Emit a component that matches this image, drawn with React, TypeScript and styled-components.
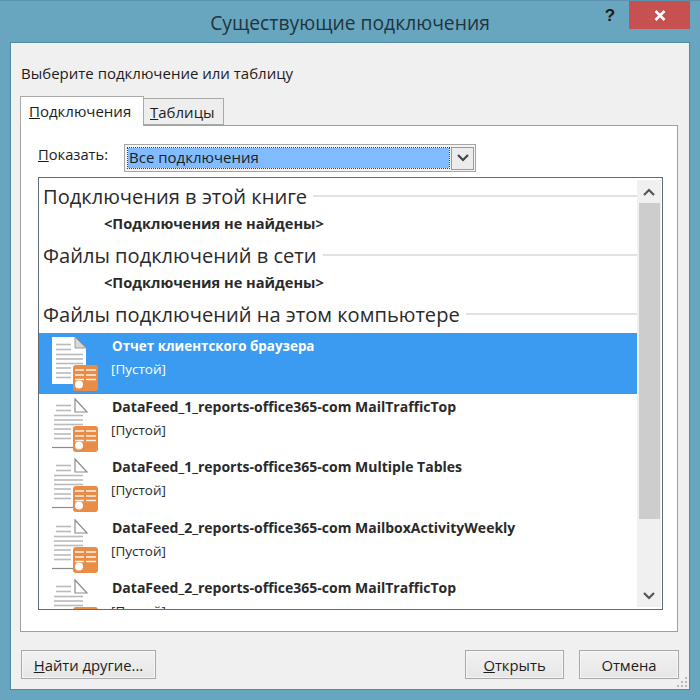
import React, { FunctionComponent } from 'react';
import styled, { createGlobalStyle } from 'styled-components';

const GlobalStyle = createGlobalStyle`
  html, body {
    margin: 0;
    padding: 0;
    background: #68a6c0;
  }
  * {
    box-sizing: border-box;
  }
`;

const Window = styled.div`
  width: 700px;
  height: 700px;
  display: flex;
  flex-direction: column;
  background: #68a6c0;
  border-top: 1px solid #5a93ab;
  font-family: "Open Sans", "Noto Sans", sans-serif;
  color: #1c1c1c;
  overflow: hidden;
`;

const TitleBar = styled.div`
  height: 41px;
  flex: none;
  display: grid;
  grid-template-columns: 1fr auto 1fr;
  padding: 0 10px;
`;

const Title = styled.div`
  grid-column: 2;
  font-size: 19.3px;
  line-height: 43px;
  color: #22343c;
`;

const Controls = styled.div`
  grid-column: 3;
  display: flex;
  justify-content: flex-end;
  align-items: flex-start;
`;

const HelpButton = styled.div`
  width: 30px;
  font-family: "Liberation Sans", sans-serif;
  font-size: 17px;
  font-weight: 700;
  line-height: 29px;
  text-align: center;
  color: #1a1a1a;
  margin-right: 4px;
`;

const CloseButton = styled.div`
  width: 61px;
  height: 28px;
  background: #c75050;
  display: flex;
  align-items: center;
  justify-content: center;
`;

const Panel = styled.div`
  position: relative;
  flex: none;
  width: 680px;
  height: 648px;
  margin-left: 10px;
  border: 1px solid #4f8ba5;
  background: #f0f0f0;
  padding: 0 10px 10px 8px;
  display: flex;
  flex-direction: column;
`;

const Prompt = styled.div`
  font-size: 15px;
  line-height: 18px;
  margin: 21px 0 14px 2px;
`;

const TabRow = styled.div`
  display: flex;
  align-items: flex-end;
  height: 29px;
  flex: none;
`;

const Tab = styled.div<{ $active?: boolean }>`
  height: ${p => (p.$active ? '30px' : '27px')};
  width: ${p => (p.$active ? '124px' : '80px')};
  margin-left: ${p => (p.$active ? '1px' : '0')};
  margin-bottom: ${p => (p.$active ? '-1px' : '0')};
  border: 1px solid #a9a9a9;
  border-bottom: ${p => (p.$active ? 'none' : '1px solid #a9a9a9')};
  border-left: ${p => (p.$active ? '1px solid #a9a9a9' : 'none')};
  background: ${p => (p.$active ? '#ffffff' : '#eeeeee')};
  position: relative;
  font-size: 15px;
  line-height: ${p => (p.$active ? '28px' : '27px')};
  padding-left: ${p => (p.$active ? '8px' : '6px')};
`;

const TabPanel = styled.div`
  flex: none;
  height: 507px;
  margin: 0 1px 0 1px;
  border: 1px solid #a0a0a0;
  background: #ffffff;
  padding: 18px 14px 21px 17px;
  display: flex;
  flex-direction: column;
`;

const ShowRow = styled.div`
  display: flex;
  align-items: flex-start;
  height: 28px;
  flex: none;
  margin-bottom: 5px;
`;

const ShowLabel = styled.div`
  width: 86px;
  font-size: 14.7px;
  line-height: 20px;
`;

const Combo = styled.div`
  width: 352px;
  height: 28px;
  border: 1px solid #a6a6a6;
  background: #f4f4f4;
  display: flex;
  align-items: center;
  padding: 0 1px 0 3px;
`;

const ComboValue = styled.div`
  flex: 1;
  height: 20px;
  background: #80bcff;
  outline: 1px dotted #4a3a20;
  font-size: 15px;
  line-height: 19px;
  padding-left: 1px;
  margin-right: 2px;
`;

const ComboArrow = styled.div`
  width: 23px;
  height: 23px;
  border: 1px solid #9a9a9a;
  background: #ececec;
  display: flex;
  align-items: center;
  justify-content: center;
`;

const ListBox = styled.div`
  flex: 1;
  border: 1px solid #5f6c75;
  background: #ffffff;
  display: flex;
  min-height: 0;
  overflow: hidden;
`;

const ListContent = styled.div`
  flex: 1;
  padding-top: 1px;
  overflow: hidden;
`;

const SectionHeader = styled.div`
  height: 36px;
  display: flex;
  align-items: center;
  padding: 0 0 2px 4px;
  font-size: 20.1px;
  color: #2a2a2a;
  &::after {
    content: '';
    flex: 1;
    height: 2px;
    margin-left: 6px;
    background: #e2e2e2;
  }
`;

const EmptyNote = styled.div`
  height: 16px;
  margin-bottom: 7px;
  padding-left: 65px;
  font-size: 14.6px;
  font-weight: 700;
  line-height: 16px;
  color: #2a2a2a;
`;

const Row = styled.div<{ $selected?: boolean }>`
  height: 60.5px;
  display: flex;
  padding-left: 13px;
  background: ${p => (p.$selected ? '#3a9bf0' : 'transparent')};
  color: ${p => (p.$selected ? '#ffffff' : '#2a2a2a')};
`;

const RowIcon = styled.svg`
  width: 50px;
  height: 60px;
  flex: none;
  margin-right: 10px;
`;

const RowText = styled.div`
  padding-top: 3px;
  min-width: 0;
`;

const RowTitle = styled.div<{ $size: number }>`
  font-size: ${p => p.$size}px;
  font-weight: 700;
  line-height: 20px;
  height: 23px;
  white-space: nowrap;
`;

const RowSub = styled.div`
  font-size: 13.5px;
  line-height: 20px;
  margin-left: -1px;
`;

const ScrollBar = styled.div`
  width: 24px;
  flex: none;
  margin: 2px 1px 2px 0;
  background: #f0f0f0;
  display: flex;
  flex-direction: column;
  align-items: center;
`;

const ScrollArrow = styled.div`
  height: 23px;
  flex: none;
  display: flex;
  align-items: center;
  justify-content: center;
`;

const ScrollTrack = styled.div`
  flex: 1;
  width: 21px;
`;

const ScrollThumb = styled.div`
  width: 100%;
  height: 316px;
  background: #cdcdcd;
`;

const Footer = styled.div`
  margin-top: 18px;
  display: flex;
  align-items: flex-start;
  padding-left: 2px;
`;

const Button = styled.div<{ $width: number; $push?: boolean }>`
  width: ${p => p.$width}px;
  height: 29px;
  margin-left: ${p => (p.$push ? 'auto' : '0')};
  border: 1px solid #a8a8a8;
  box-shadow: inset 0 0 0 1px #f6f6f6;
  background: linear-gradient(#f2f2f2, #e6e6e6);
  font-size: 14.8px;
  line-height: 28px;
  text-align: center;
`;

const ButtonGap = styled.div`
  width: 15px;
  flex: none;
`;

const Grip = styled.svg`
  position: absolute;
  right: 1px;
  bottom: 1px;
  width: 12px;
  height: 12px;
`;

const Chevron: FunctionComponent<{ up?: boolean; color?: string }> = ({ up, color = '#555' }) => (
  <svg width="16" height="10" viewBox="0 0 16 10">
    <path
      d={up ? 'M3 8 L8 3 L13 8' : 'M3 2 L8 7 L13 2'}
      fill="none"
      stroke={color}
      strokeWidth="2.2"
    />
  </svg>
);

// page with a fold and the orange connection badge
const ConnectionIcon: FunctionComponent<{ selected?: boolean }> = ({ selected }) => {
  const left = selected ? 4 : 2;
  const pageLines = [
    { x1: 4, x2: 19, y: 11.5 },
    { x1: 4, x2: 19, y: 16.5 },
    { x1: left, x2: 31, y: 21.5 },
    { x1: left, x2: 31, y: 26 },
    { x1: left, x2: 31, y: 30.5 },
    { x1: left, x2: 19, y: 35 },
    { x1: left, x2: 19, y: 40 },
    { x1: left, x2: 19, y: 44.5 },
  ];
  return (
    <RowIcon viewBox="0 0 50 60">
      {selected ? (
        <>
          <path d="M0 4 H23 L34 15 V51 H0 Z" fill="#ffffff" />
          <path d="M23 4 L34 15 H23 Z" fill="#d8d8d8" stroke="#9a9a9a" />
        </>
      ) : (
        <>
          <path d="M23 5 L35 18 H23 Z" fill="#ffffff" stroke="#8c8c8c" strokeWidth="1.2" />
          <path d="M0 53.5 H22" stroke="#8c8c8c" strokeWidth="1.2" />
        </>
      )}
      {pageLines.map(l => (
        <path key={l.y} d={`M${l.x1} ${l.y} H${l.x2}`} stroke="#bababa" strokeWidth="1.6" />
      ))}
      <rect x="21" y="32" width="25" height="26" rx="3" fill="#e98c45" />
      <path d="M23 37 H32 M34 37 H44 M23 42 H32 M34 42 H44 M23 46.5 H32 M34 46.5 H44" stroke="#ffffff" strokeWidth="1.5" opacity="0.9" />
      <circle cx="27" cy="51.5" r="4" fill="#ffffff" />
    </RowIcon>
  );
};

const rows = [
  { title: 'Отчет клиентского браузера', size: 13.4, selected: true },
  { title: 'DataFeed_1_reports-office365-com MailTrafficTop', size: 14 },
  { title: 'DataFeed_1_reports-office365-com Multiple Tables', size: 14 },
  { title: 'DataFeed_2_reports-office365-com MailboxActivityWeekly', size: 14 },
  { title: 'DataFeed_2_reports-office365-com MailTrafficTop', size: 14 },
];

const App: FunctionComponent = () => {
  return (
    <Window>
      <GlobalStyle />
      <TitleBar>
        <Title>Существующие подключения</Title>
        <Controls>
          <HelpButton>?</HelpButton>
          <CloseButton>
            <svg width="12" height="11" viewBox="0 0 12 11">
              <path d="M1.5 1 L10.5 10 M10.5 1 L1.5 10" stroke="#ffffff" strokeWidth="2.6" />
            </svg>
          </CloseButton>
        </Controls>
      </TitleBar>
      <Panel>
        <Prompt>Выберите подключение или таблицу</Prompt>
        <TabRow>
          <Tab $active><u>П</u>одключения</Tab>
          <Tab><u>Т</u>аблицы</Tab>
        </TabRow>
        <TabPanel>
          <ShowRow>
            <ShowLabel><u>П</u>оказать:</ShowLabel>
            <Combo>
              <ComboValue>Все подключения</ComboValue>
              <ComboArrow><Chevron color="#444" /></ComboArrow>
            </Combo>
          </ShowRow>
          <ListBox>
            <ListContent>
              <SectionHeader>Подключения в этой книге</SectionHeader>
              <EmptyNote>&lt;Подключения не найдены&gt;</EmptyNote>
              <SectionHeader>Файлы подключений в сети</SectionHeader>
              <EmptyNote>&lt;Подключения не найдены&gt;</EmptyNote>
              <SectionHeader>Файлы подключений на этом компьютере</SectionHeader>
              {rows.map(r => (
                <Row key={r.title} $selected={r.selected}>
                  <ConnectionIcon selected={r.selected} />
                  <RowText>
                    <RowTitle $size={r.size}>{r.title}</RowTitle>
                    <RowSub>[Пустой]</RowSub>
                  </RowText>
                </Row>
              ))}
            </ListContent>
            <ScrollBar>
              <ScrollArrow><Chevron up /></ScrollArrow>
              <ScrollTrack><ScrollThumb /></ScrollTrack>
              <ScrollArrow><Chevron /></ScrollArrow>
            </ScrollBar>
          </ListBox>
        </TabPanel>
        <Footer>
          <Button $width={135}><u>Н</u>айти другие...</Button>
          <Button $width={99} $push><u>О</u>ткрыть</Button>
          <ButtonGap />
          <Button $width={100}>Отмена</Button>
        </Footer>
        <Grip viewBox="0 0 12 12">
          <path d="M9 1h2v2H9z M5 5h2v2H5z M9 5h2v2H9z M1 9h2v2H1z M5 9h2v2H5z M9 9h2v2H9z" fill="#b8b8b8" />
        </Grip>
      </Panel>
    </Window>
  );
};

export default App;
